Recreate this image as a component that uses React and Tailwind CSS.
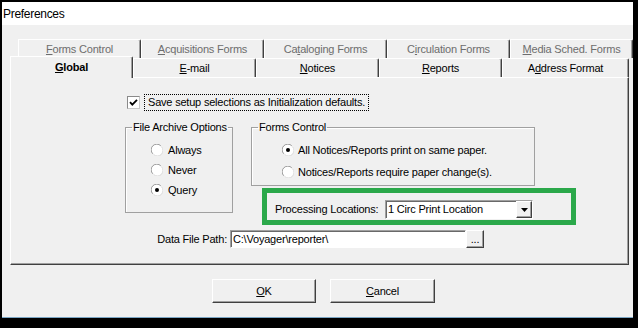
import React from 'react';

// ── Win classic bits ──────────────────────────────────────────────────────────
const RAISED =
  'border border-t-white border-l-white border-r-[#404040] border-b-[#404040] shadow-[inset_-1px_-1px_0_#a0a0a0]';
const SUNKEN =
  'border border-t-[#a0a0a0] border-l-[#a0a0a0] border-r-white border-b-white shadow-[inset_1px_1px_0_#696969]';

function Mn({ children }) {
  return <span className="underline underline-offset-[1px]">{children}</span>;
}

function Radio({ checked }) {
  return (
    <svg width="12" height="12" viewBox="0 0 12 12" className="shrink-0">
      <circle cx="6" cy="6" r="5.5" fill="#fff" />
      <path d="M1.8 9.8 A5.2 5.2 0 0 1 9.8 1.8" stroke="#9a9a9a" strokeWidth="1" fill="none" />
      <path d="M2.6 10.4 A5.2 5.2 0 0 0 10.4 2.6" stroke="#dcdcdc" strokeWidth="1" fill="none" />
      {checked && <circle cx="6" cy="6" r="2" fill="#000" />}
    </svg>
  );
}

function Checkbox() {
  return (
    <div className="w-[13px] h-[13px] bg-white border border-t-[#8a8a8a] border-l-[#8a8a8a] border-r-[#c8c8c8] border-b-[#c8c8c8] flex items-center justify-center">
      <svg width="9" height="9" viewBox="0 0 9 9">
        <polyline points="1,4.2 3.3,6.6 8,1.8" stroke="#000" strokeWidth="1.8" fill="none" />
      </svg>
    </div>
  );
}

function GroupBox({ title, className, children }) {
  return (
    <fieldset className={`border border-[#a0a0a0] shadow-[inset_1px_1px_0_#fff] ${className}`}>
      <legend className="ml-[6px] px-[1px] leading-[13px]">{title}</legend>
      {children}
    </fieldset>
  );
}

const backTabs = [
  <><Mn>F</Mn>orms Control</>,
  <><Mn>A</Mn>cquisitions Forms</>,
  <>Ca<Mn>t</Mn>aloging Forms</>,
  <>C<Mn>i</Mn>rculation Forms</>,
  <><Mn>M</Mn>edia Sched. Forms</>,
];

const frontTabs = [
  <><Mn>E</Mn>-mail</>,
  <><Mn>N</Mn>otices</>,
  <><Mn>R</Mn>eports</>,
  <>A<Mn>d</Mn>dress Format</>,
];

export default function App() {
  return (
    <div className="w-[638px] h-[328px] bg-black pl-[2px] pr-[5px] pt-[2px] pb-[10px] flex flex-col text-[11px] tracking-[-0.2px] text-black font-['Liberation_Sans',Arial,sans-serif]">
      {/* Title bar */}
      <div className="h-[23px] bg-white pl-[1px] flex items-center text-[12px] tracking-[-0.3px]">
        Preferences
      </div>

      {/* Dialog body */}
      <div className="flex-1 bg-[#f0f0f0] border-b border-[#7ba6c5] flex flex-col">
        {/* Back row of tabs */}
        <div className="ml-[16px] mt-[14px] h-[19px] flex">
          {backTabs.map((label, i) => (
            <div
              key={i}
              className="w-[123px] h-[19px] border-l border-t border-white border-r border-r-[#404040] rounded-tr-[2px] shadow-[inset_-1px_0_0_#a0a0a0] flex justify-center pt-[3px] leading-[13px] text-[#6d6d6d] whitespace-nowrap"
            >
              {label}
            </div>
          ))}
        </div>

        {/* Front row of tabs */}
        <div className="ml-[8px] w-[619px] h-[19px] flex items-end relative z-10">
          <div className="w-[123px] h-[22px] -mb-[1px] bg-[#f0f0f0] border-l border-t border-white border-r border-r-[#404040] rounded-tr-[2px] shadow-[inset_-1px_0_0_#a0a0a0] flex justify-center pt-[4px] leading-[13px] font-bold">
            <span><Mn>G</Mn>lobal</span>
          </div>
          {frontTabs.map((label, i) => (
            <div
              key={i}
              className={`${i === frontTabs.length - 1 ? 'flex-1' : 'w-[123px]'} h-[19px] border-l border-t border-white border-r border-r-[#404040] rounded-tr-[2px] shadow-[inset_-1px_0_0_#a0a0a0] flex justify-center pt-[3px] leading-[13px] whitespace-nowrap`}
            >
              {label}
            </div>
          ))}
        </div>

        {/* Tab page */}
        <div className="ml-[8px] w-[619px] h-[188px] border border-t-white border-l-white border-r-[#404040] border-b-[#404040] shadow-[inset_-1px_-1px_0_#a0a0a0] flex flex-col pl-[114px] pt-[16px]">
          {/* Save defaults */}
          <div className="ml-[2px] h-[17px] flex items-center gap-[4px]">
            <Checkbox />
            <div className="h-[17px] border border-dotted border-black px-[3px] flex items-center whitespace-nowrap">
              Save setup selections as Initialization defaults.
            </div>
          </div>

          {/* Group boxes */}
          <div className="mt-[10px] flex items-start">
            <GroupBox title="File Archive Options" className="w-[108px] h-[92px]">
              <div className="pt-[6px] pl-[25px] flex flex-col">
                {[['Always', false], ['Never', false], ['Query', true]].map(([t, c]) => (
                  <div key={t} className="h-[20px] flex items-center gap-[5px]">
                    <Radio checked={c} />
                    <span>{t}</span>
                  </div>
                ))}
              </div>
            </GroupBox>

            <div className="ml-[18px] flex flex-col">
              <GroupBox title="Forms Control" className="w-[284px] h-[65px]">
                <div className="pt-[5px] pl-[30px] flex flex-col">
                  <div className="h-[22px] flex items-center gap-[4px]">
                    <Radio checked />
                    <span>All Notices/Reports print on same paper.</span>
                  </div>
                  <div className="h-[22px] flex items-center gap-[4px]">
                    <Radio />
                    <span>Notices/Reports require paper change(s).</span>
                  </div>
                </div>
              </GroupBox>

              {/* Highlighted processing locations */}
              <div className="mt-[2px] ml-[11px] w-[314px] h-[37px] border-[5px] border-[#2ba84a] flex items-center pt-[6px] pl-[8px]">
                <span className="w-[110px] whitespace-nowrap">Processing Locations:</span>
                <div className={`w-[148px] h-[19px] bg-white ${SUNKEN} flex items-center`}>
                  <span className="flex-1 pl-[2px] whitespace-nowrap">1 Circ Print Location</span>
                  <div className={`w-[16px] h-[17px] bg-[#f0f0f0] ${RAISED} flex items-center justify-center`}>
                    <svg width="7" height="4" viewBox="0 0 7 4">
                      <polygon points="0,0 7,0 3.5,4" fill="#000" />
                    </svg>
                  </div>
                </div>
              </div>
            </div>
          </div>

          {/* Data file path */}
          <div className="mt-[5px] ml-[30px] h-[18px] flex items-center">
            <span className="w-[72px] text-right whitespace-nowrap">Data File Path:</span>
            <div className={`ml-[3px] w-[236px] h-[18px] bg-white ${SUNKEN} flex items-center pl-[2px] whitespace-nowrap`}>
              C:\Voyager\reporter\
            </div>
            <div className={`w-[18px] h-[18px] bg-[#f0f0f0] ${RAISED} flex items-end justify-center pb-[2px] leading-none`}>
              ...
            </div>
          </div>
        </div>

        {/* Buttons */}
        <div className="ml-[210px] mt-[14px] flex gap-[14px]">
          <button className={`w-[104px] h-[24px] bg-[#f0f0f0] ${RAISED} flex items-center justify-center`}>
            <span><Mn>O</Mn>K</span>
          </button>
          <button className={`w-[105px] h-[24px] bg-[#f0f0f0] ${RAISED} flex items-center justify-center`}>
            <span><Mn>C</Mn>ancel</span>
          </button>
        </div>
      </div>
    </div>
  );
}
